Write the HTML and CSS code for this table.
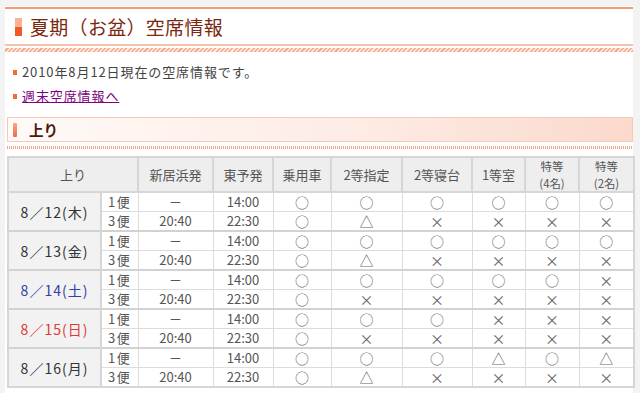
FILE: index.html
```html
<!DOCTYPE html>
<html lang="ja">
<head>
<meta charset="utf-8">
<title>夏期(お盆)空席情報</title>
<link rel="stylesheet" href="styles.css">
</head>
<body>
<div class="page">
  <div class="title-block">
    <h1 class="title"><span class="title-mark"></span>夏期（お盆）空席情報</h1>
    <div class="hatch"></div>
  </div>
  <ul class="info">
    <li>2010年8月12日現在の空席情報です。</li>
    <li><a class="link" href="#">週末空席情報へ</a></li>
  </ul>
  <h2 class="section"><span class="section-mark"></span>上り</h2>
  <div class="dots"></div>
  <table class="seats">
    <colgroup>
      <col class="c-date"><col class="c-bin"><col class="c-nii"><col class="c-toyo"><col class="c-car">
      <col class="c-2s"><col class="c-2b"><col class="c-1"><col class="c-t4"><col class="c-t2">
    </colgroup>
    <thead>
      <tr>
        <th colspan="2">上り</th><th>新居浜発</th><th>東予発</th><th>乗用車</th><th>2等指定</th><th>2等寝台</th><th>1等室</th><th><span class="two">特等</span><span class="two">(4名)</span></th><th><span class="two">特等</span><span class="two">(2名)</span></th>
      </tr>
    </thead>
    <tbody>
      <tr class="first"><td rowspan="2" class="date">8／12(木)</td><td class="bin">1便</td><td>－</td><td>14:00</td><td class="s">○</td><td class="s">○</td><td class="s">○</td><td class="s">○</td><td class="s">○</td><td class="s">○</td></tr>
      <tr><td class="bin">3便</td><td>20:40</td><td>22:30</td><td class="s">○</td><td class="s">△</td><td class="s">×</td><td class="s">×</td><td class="s">×</td><td class="s">×</td></tr>
      <tr class="first"><td rowspan="2" class="date">8／13(金)</td><td class="bin">1便</td><td>－</td><td>14:00</td><td class="s">○</td><td class="s">○</td><td class="s">○</td><td class="s">○</td><td class="s">○</td><td class="s">○</td></tr>
      <tr><td class="bin">3便</td><td>20:40</td><td>22:30</td><td class="s">○</td><td class="s">△</td><td class="s">×</td><td class="s">×</td><td class="s">×</td><td class="s">×</td></tr>
      <tr class="first"><td rowspan="2" class="date sat">8／14(土)</td><td class="bin">1便</td><td>－</td><td>14:00</td><td class="s">○</td><td class="s">○</td><td class="s">○</td><td class="s">○</td><td class="s">○</td><td class="s">×</td></tr>
      <tr><td class="bin">3便</td><td>20:40</td><td>22:30</td><td class="s">○</td><td class="s">×</td><td class="s">×</td><td class="s">×</td><td class="s">×</td><td class="s">×</td></tr>
      <tr class="first"><td rowspan="2" class="date sun">8／15(日)</td><td class="bin">1便</td><td>－</td><td>14:00</td><td class="s">○</td><td class="s">○</td><td class="s">○</td><td class="s">×</td><td class="s">×</td><td class="s">×</td></tr>
      <tr><td class="bin">3便</td><td>20:40</td><td>22:30</td><td class="s">○</td><td class="s">×</td><td class="s">×</td><td class="s">×</td><td class="s">×</td><td class="s">×</td></tr>
      <tr class="first"><td rowspan="2" class="date">8／16(月)</td><td class="bin">1便</td><td>－</td><td>14:00</td><td class="s">○</td><td class="s">○</td><td class="s">○</td><td class="s">△</td><td class="s">○</td><td class="s">△</td></tr>
      <tr><td class="bin">3便</td><td>20:40</td><td>22:30</td><td class="s">○</td><td class="s">△</td><td class="s">×</td><td class="s">×</td><td class="s">×</td><td class="s">×</td></tr>
    </tbody>
  </table>
</div>
</body>
</html>
```

FILE: styles.css
```css
html, body {
  margin: 0;
  padding: 0;
}
body {
  background: #f3f3f3;
  font-family: "Noto Sans CJK JP", "Noto Sans", sans-serif;
  color: #444;
}
.page {
  margin: 6px 7px 0 5px;
  background: #fff;
  padding: 1px 0 8px;
  min-height: 380px;
}
.title-block {
  border-top: 2px solid #f39a74;
}
.title {
  margin: 0;
  height: 35px;
  display: flex;
  align-items: center;
  padding-left: 10px;
  font-size: 19px;
  font-weight: normal;
  letter-spacing: 0.3px;
  color: #7a2810;
  border-bottom: 2px solid #f9c0a8;
}
.title-mark {
  display: inline-block;
  width: 7px;
  height: 18px;
  margin-right: 8px;
  background: linear-gradient(to bottom, #f8b394 0, #f8b394 50%, #f05a28 50%, #f05a28 100%);
}
.hatch {
  height: 4px;
  margin-top: 2px;
  background: repeating-linear-gradient(-45deg, #f6ab8e 0, #f6ab8e 1.5px, #fde7de 1.5px, #fde7de 3px);
}
.info {
  list-style: none;
  margin: 8px 0 0;
  padding: 0 0 0 8px;
  font-size: 13px;
  letter-spacing: 0.9px;
  line-height: 24px;
  color: #444;
}
.info li {
  display: flex;
  align-items: center;
}
.info li::before {
  content: "";
  width: 4px;
  height: 5px;
  background: #f26a3a;
  margin-right: 5px;
}
.link {
  color: #800080;
  text-decoration: underline;
}
.section {
  margin: 9px 0 0 2px;
  height: 23px;
  display: flex;
  align-items: center;
  padding-left: 5px;
  border: 1px solid #f7c9b8;
  background: linear-gradient(to right, #fffaf8 0%, #fdeae3 60%, #fbd9cc 100%);
  font-size: 14.5px;
  font-weight: bold;
  color: #4a1a0a;
}
.section-mark {
  display: inline-block;
  width: 4px;
  height: 14px;
  margin-right: 12px;
  border-radius: 1px;
  background: linear-gradient(to bottom, #f7a788, #ef6a44);
}
.dots {
  height: 3px;
  margin: 4px 0 0 2px;
  background: repeating-linear-gradient(to right, #f3a68a 0, #f3a68a 1px, #fff 1px, #fff 2px);
}
.seats {
  margin: 7px 0 0 2px;
  width: 626px;
  border-collapse: collapse;
  table-layout: fixed;
  border: 2px solid #d6d6d6;
  font-size: 12.5px;
  color: #555;
}
.c-date { width: 93px; }
.c-bin { width: 37px; }
.c-nii { width: 75px; }
.c-toyo { width: 60px; }
.c-car { width: 58px; }
.c-2s { width: 71px; }
.c-2b { width: 70px; }
.c-1 { width: 53px; }
.c-t4 { width: 54px; }
.c-t2 { width: 55px; }
.seats th {
  background: #eeeeee;
  font-weight: normal;
  height: 32px;
  border: 2px solid #d6d6d6;
  padding: 0;
  color: #555;
  font-size: 13px;
  line-height: 15px;
}
.seats th .two {
  display: block;
  line-height: 16.5px;
  font-size: 11.4px;
}
.seats td {
  height: 18px;
  padding: 0;
  text-align: center;
  border: 1px solid #dcdcdc;
  line-height: 18px;
  white-space: nowrap;
  font-size: 13px;
}
.seats tr.first td {
  border-top: 2px solid #d2d2d2;
}
.seats td.date {
  background: #f2f2f2;
  font-size: 14px;
  letter-spacing: 1px;
  color: #333;
  border-right: 2px solid #d6d6d6;
}
.seats td.date.sat { color: #3040a8; }
.seats td.date.sun { color: #e03a32; }
.seats td.bin {
  text-align: left;
  padding-left: 6px;
  font-size: 13px;
  color: #555;
  letter-spacing: 1.5px;
}
.seats td.s {
  color: #666;
  font-size: 14px;
  line-height: 18px;
}
```
